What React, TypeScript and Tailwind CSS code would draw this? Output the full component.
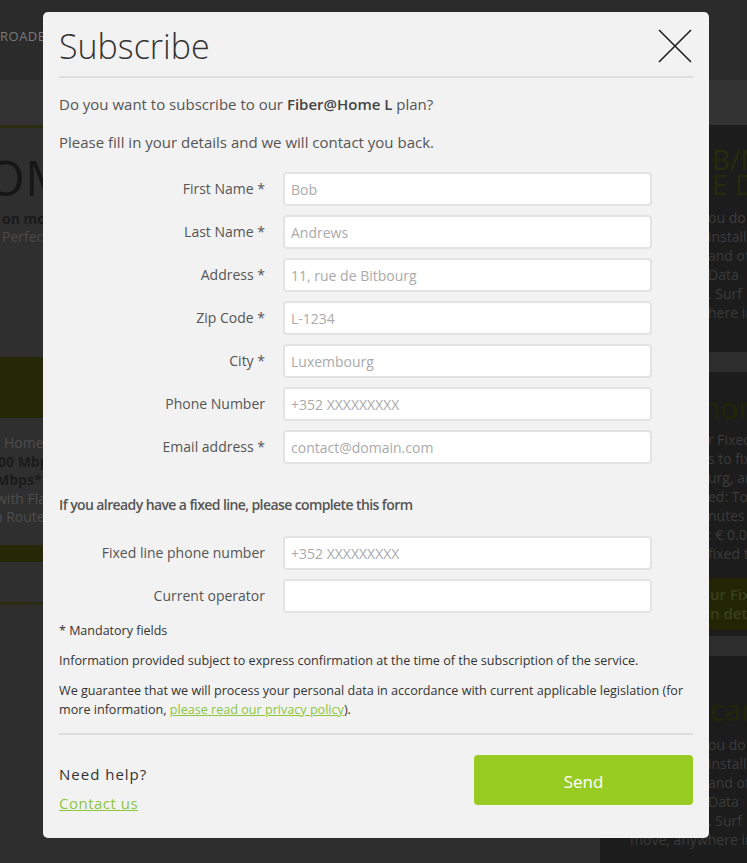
import React from "react";

const fields: { label: string; placeholder: string }[] = [
  { label: "First Name *", placeholder: "Bob" },
  { label: "Last Name *", placeholder: "Andrews" },
  { label: "Address *", placeholder: "11, rue de Bitbourg" },
  { label: "Zip Code *", placeholder: "L-1234" },
  { label: "City *", placeholder: "Luxembourg" },
  { label: "Phone Number", placeholder: "+352 XXXXXXXXX" },
  { label: "Email address *", placeholder: "contact@domain.com" },
];

const fixedFields: { label: string; placeholder: string }[] = [
  { label: "Fixed line phone number", placeholder: "+352 XXXXXXXXX" },
  { label: "Current operator", placeholder: "" },
];

function Row({ label, placeholder }: { label: string; placeholder: string }) {
  return (
    <div className="flex items-center h-[34px]">
      <label className="w-[206px] text-right text-[14px] text-[#555] leading-[20px] shrink-0">{label}</label>
      <input
        className="ml-[18px] w-[369px] h-[34px] bg-white border-2 border-[#e3e3e3] rounded-[4px] pl-[6px] text-[14px] text-[#333] placeholder:text-[#aaa] outline-none"
        placeholder={placeholder}
      />
    </div>
  );
}

export default function App() {
  return (
    <div className="relative w-[747px] h-[863px] overflow-hidden bg-[#2e2e2e]" style={{ fontFamily: '"Open Sans", sans-serif' }}>
      {/* background page */}
      <div className="h-[80px] bg-[#2b2b2b] pt-[23px]">
        <span className="text-[13px] text-[#7a7a7a] tracking-[0.5px]">ROADBAND</span>
      </div>
      <div className="h-[45px] bg-[#333333]" />
      <div className="flex">
        <div className="w-[600px] bg-[#2f2f2f]">
          <div className="h-[3px] bg-[#2c2e12]" />
          <div className="h-[229px] pt-[22px]">
            <div className="text-[50px] leading-[54px] text-[#161616] ml-[-14px]">OM</div>
            <div className="text-[14px] font-bold text-[#1a1a1a] leading-[18px] mt-[6px] ml-[2px]">on mobile</div>
            <div className="text-[14px] text-[#4a4a4a] leading-[18px] ml-[2px]">Perfect</div>
          </div>
          <div className="h-[61px] bg-[#252806]" />
          <div className="h-[127px] pt-[16px] text-[14px] leading-[18.5px]">
            <div className="text-[#4d4d4d] ml-[4px]">Home</div>
            <div className="font-bold text-[#1b1b1b] ml-[-2px]">00 Mbps</div>
            <div className="font-bold text-[#1b1b1b] ml-[-4px]">Mbps*</div>
            <div className="text-[#4d4d4d] ml-[-4px]">with Flat</div>
            <div className="text-[#4d4d4d] ml-[-6px]">h Router</div>
          </div>
          <div className="h-[17px] bg-[#252806]" />
          <div className="h-[40px]" />
          <div className="h-[3px] bg-[#2a2c12]" />
          <div className="h-[300px] bg-[#2e2e2e]" />
        </div>
        <div className="w-[147px] bg-[#1b1c1b] overflow-hidden whitespace-nowrap">
          <div className="h-[227px] pl-[108px] pt-[22px]">
            <div className="text-[28px] leading-[25px] text-[#262b0c]">
              <div className="ml-[4px]">B/M</div>
              <div className="ml-[4px]">E DA</div>
            </div>
            <div className="mt-[11px] text-[14px] leading-[19px] text-[#3b3b3b]">
              <div>ou do</div>
              <div>install</div>
              <div>and of</div>
              <div>Data</div>
              <div>. Surf</div>
              <div>here in</div>
            </div>
          </div>
          <div className="h-[20px] bg-[#2d2d2d]" />
          <div className="h-[206px] pl-[108px] pt-[19px]">
            <div className="text-[30px] leading-[34px] text-[#222608] -ml-[6px]">home</div>
            <div className="mt-[5px] text-[14px] leading-[19px] text-[#3b3b3b]">
              <div>r Fixed</div>
              <div>s to fix</div>
              <div>urg, an</div>
              <div>ed: To</div>
              <div>nutes</div>
              <div>: € 0.0</div>
              <div>fixed t</div>
            </div>
          </div>
          <div className="h-[52px] bg-[#222605] pl-[110px] pt-[7px] text-[15px] leading-[19px] text-[#3a401c] font-semibold">
            <div>ur Fix</div>
            <div>n det</div>
          </div>
          <div className="h-[6px]" />
          <div className="h-[20px] bg-[#2d2d2d]" />
          <div className="pl-[108px] pt-[37px]">
            <div className="text-[30px] leading-[34px] text-[#222608] ml-[2px]">care</div>
            <div className="mt-[8px] text-[14px] leading-[19px] text-[#3b3b3b]">
              <div>ou do</div>
              <div>install</div>
              <div>and of</div>
              <div>Data</div>
              <div>. Surf</div>
              <div className="-ml-[78px]">move, anywhere in</div>
            </div>
          </div>
        </div>
      </div>

      {/* modal */}
      <div className="absolute left-[43px] top-[12px] w-[666px] h-[826px] bg-[#f2f2f2] rounded-[5px] px-[16px]">
        <div className="flex items-start justify-between pt-[14px]">
          <h2 className="text-[34px] font-light leading-[40px] text-[#333]">Subscribe</h2>
          <svg width="35" height="35" viewBox="0 0 35 35" className="mt-[3px]">
            <line x1="1" y1="1" x2="33" y2="33" stroke="#1e1e1e" strokeWidth="1.6" />
            <line x1="33" y1="1" x2="1" y2="33" stroke="#1e1e1e" strokeWidth="1.6" />
          </svg>
        </div>
        <div className="mt-[10px] h-[2px] bg-[#dedede]" />

        <p className="mt-[16px] text-[15px] leading-[20px] text-[#555]">
          Do you want to subscribe to our <span className="font-semibold text-[#444]">Fiber@Home L</span> plan?
        </p>
        <p className="mt-[18px] text-[15px] leading-[20px] text-[#555]">Please fill in your details and we will contact you back.</p>

        <div className="mt-[20px] flex flex-col gap-[9px]">
          {fields.map((f) => (
            <Row key={f.label} label={f.label} placeholder={f.placeholder} />
          ))}
        </div>

        <p className="mt-[31px] text-[14px] leading-[20px] font-semibold text-[#555] tracking-[-0.6px]">
          If you already have a fixed line, please complete this form
        </p>

        <div className="mt-[21px] flex flex-col gap-[9px]">
          {fixedFields.map((f) => (
            <Row key={f.label} label={f.label} placeholder={f.placeholder} />
          ))}
        </div>

        <p className="mt-[9px] text-[12.5px] leading-[18px] text-[#333]">* Mandatory fields</p>
        <p className="mt-[12px] text-[12.6px] leading-[18px] text-[#333]">
          Information provided subject to express confirmation at the time of the subscription of the service.
        </p>
        <p className="mt-[11px] text-[12.6px] leading-[19px] text-[#333]">
          We guarantee that we will process your personal data in accordance with current applicable legislation (for more information,{" "}
          <a className="text-[#8cc63f] underline">please read our privacy policy</a>).
        </p>

        <div className="mt-[14px] h-[2px] bg-[#dedede]" />

        <div className="mt-[20px] flex justify-between">
          <div className="pt-[9px]">
            <div className="text-[15px] leading-[20px] text-[#333] tracking-[1px]">Need help?</div>
            <a className="block mt-[9px] text-[15px] leading-[20px] text-[#8cc63f] underline tracking-[0.5px]">Contact us</a>
          </div>
          <button className="w-[219px] h-[50px] bg-[#99cc22] rounded-[4px] text-white text-[17px] pt-[3px]">Send</button>
        </div>
      </div>
    </div>
  );
}
